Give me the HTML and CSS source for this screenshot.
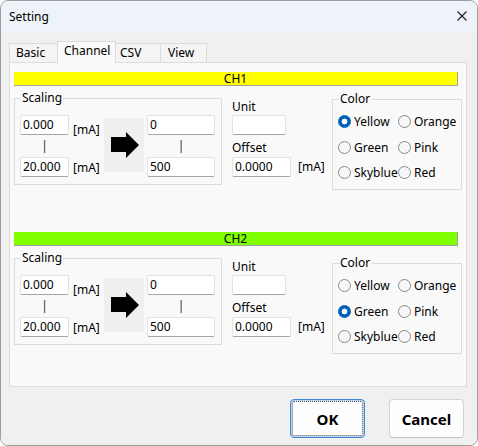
FILE: index.html
```html
<!DOCTYPE html>
<html>
<head>
<meta charset="utf-8">
<title>Setting</title>
<link rel="stylesheet" href="styles.css">
</head>
<body>
<div class="window">
  <div class="titlebar">
    <span class="title">Setting</span>
    <svg class="close" width="10" height="10" viewBox="0 0 10 10"><path d="M0.5 0.5 L9.5 9.5 M9.5 0.5 L0.5 9.5" stroke="#1c1c1c" stroke-width="1.1" fill="none"/></svg>
  </div>
  <div class="client">
    <div class="tabs">
      <div class="tab tab-basic">Basic</div>
      <div class="tab tab-channel selected">Channel</div>
      <div class="tab tab-csv">CSV</div>
      <div class="tab tab-view">View</div>
    </div>
    <div class="panel">
      <section class="channel first">
        <div class="ch-bar ch1">CH1</div>
        <div class="ch-row">
          <div class="group scaling">
            <div class="group-title">Scaling</div>
            <div class="scale-grid">
              <div class="tb in-l row1">0.000</div>
              <div class="unit-lbl u1">[mA]</div>
              <div class="arrow-box"><svg width="28" height="26" viewBox="0 0 28 26"><path d="M0 5 H15 V0 L28 13 L15 26 V20 H0 Z" fill="#000"/></svg></div>
              <div class="tb in-r row1">0</div>
              <div class="vbar vl">|</div>
              <div class="vbar vr">|</div>
              <div class="tb in-l row3">20.000</div>
              <div class="unit-lbl u3">[mA]</div>
              <div class="tb in-r row3">500</div>
            </div>
          </div>
          <div class="unit-col">
            <div class="lbl">Unit</div>
            <div class="tb unit-tb"></div>
            <div class="lbl offset-lbl">Offset</div>
            <div class="offset-row"><div class="tb offset-tb">0.0000</div><span class="offset-unit">[mA]</span></div>
          </div>
          <div class="group color">
            <div class="group-title">Color</div>
            <div class="radio-grid">
              <div class="radio"><span class="dot on"></span>Yellow</div>
              <div class="radio"><span class="dot"></span>Orange</div>
              <div class="radio"><span class="dot"></span>Green</div>
              <div class="radio"><span class="dot"></span>Pink</div>
              <div class="radio"><span class="dot"></span>Skyblue</div>
              <div class="radio"><span class="dot"></span>Red</div>
            </div>
          </div>
        </div>
      </section>
      <section class="channel second">
        <div class="ch-bar ch2">CH2</div>
        <div class="ch-row">
          <div class="group scaling">
            <div class="group-title">Scaling</div>
            <div class="scale-grid">
              <div class="tb in-l row1">0.000</div>
              <div class="unit-lbl u1">[mA]</div>
              <div class="arrow-box"><svg width="28" height="26" viewBox="0 0 28 26"><path d="M0 5 H15 V0 L28 13 L15 26 V20 H0 Z" fill="#000"/></svg></div>
              <div class="tb in-r row1">0</div>
              <div class="vbar vl">|</div>
              <div class="vbar vr">|</div>
              <div class="tb in-l row3">20.000</div>
              <div class="unit-lbl u3">[mA]</div>
              <div class="tb in-r row3">500</div>
            </div>
          </div>
          <div class="unit-col">
            <div class="lbl">Unit</div>
            <div class="tb unit-tb"></div>
            <div class="lbl offset-lbl">Offset</div>
            <div class="offset-row"><div class="tb offset-tb">0.0000</div><span class="offset-unit">[mA]</span></div>
          </div>
          <div class="group color color-low">
            <div class="group-title">Color</div>
            <div class="radio-grid">
              <div class="radio"><span class="dot"></span>Yellow</div>
              <div class="radio"><span class="dot"></span>Orange</div>
              <div class="radio"><span class="dot on"></span>Green</div>
              <div class="radio"><span class="dot"></span>Pink</div>
              <div class="radio"><span class="dot"></span>Skyblue</div>
              <div class="radio"><span class="dot"></span>Red</div>
            </div>
          </div>
        </div>
      </section>
    </div>
    <div class="buttons">
      <div class="btn btn-ok">OK</div>
      <div class="btn btn-cancel">Cancel</div>
    </div>
  </div>
</div>
</body>
</html>
```

FILE: styles.css
```css
* { box-sizing: border-box; }
html, body {
  margin: 0;
  padding: 0;
  background: #ffffff;
}
body {
  font-family: "Noto Sans", "Open Sans", sans-serif;
  font-size: 12px;
  color: #000;
}
.window {
  width: 478px;
  height: 446px;
  border: 1px solid #9c9c9c;
  border-radius: 8px;
  overflow: hidden;
  background: #f0f0f0;
  display: flex;
  flex-direction: column;
}
.titlebar {
  height: 31px;
  flex: none;
  background: #eef3f9;
  display: flex;
  align-items: center;
  justify-content: space-between;
  padding-left: 8px;
  padding-right: 10px;
}
.title {
  font-size: 12px;
  line-height: 16px;
  color: #000;
}
.close { display: block; margin-top: -1px; }
.client {
  flex: 1;
  background: #f0f0f0;
}
.tabs {
  display: flex;
  align-items: flex-end;
  height: 30px;
  padding-left: 8px;
}
.tab {
  height: 19px;
  line-height: 18px;
  border: 1px solid #dcdcdc;
  border-bottom: none;
  background: #f4f4f4;
  white-space: nowrap;
}
.tab + .tab { margin-left: -1px; }
.tab-basic { width: 49px; padding-left: 6px; }
.tab-channel { width: 59px; padding-left: 6px; }
.tab-csv { width: 46px; padding-left: 4px; }
.tab-view { width: 47px; padding-left: 7px; }
.tab.selected {
  height: 22px;
  line-height: 18px;
  background: #f9f9f9;
  margin-bottom: -1px;
  position: relative;
  z-index: 1;
}
.panel {
  margin-left: 8px;
  width: 458px;
  height: 325px;
  border: 1px solid #dcdcdc;
  background: #f9f9f9;
}
.channel { padding-left: 4px; }
.first .ch-bar { margin-top: 9px; }
.second .ch-bar { margin-top: 42px; }
.ch-bar {
  width: 444px;
  height: 14px;
  line-height: 13px;
  text-align: center;
  font-size: 12px;
  border-right: 1px solid #a0a0a0;
  border-bottom: 1px solid #a0a0a0;
}
.ch1 { background: #ffff00; }
.ch2 { background: #80ff00; }
.ch-row {
  display: flex;
  align-items: flex-start;
  margin-top: 12px;
}
.group {
  border: 1px solid #dcdcdc;
}
.group-title {
  width: fit-content;
  margin-top: -9px;
  margin-left: 6px;
  padding: 0 1px;
  line-height: 16px;
  background: #f9f9f9;
}
.scaling {
  width: 208px;
  height: 87px;
}
.scale-grid {
  display: grid;
  grid-template-columns: 49px 35px 40px 71px;
  grid-template-rows: 20px 22px 20px;
  margin-top: 9px;
  margin-left: 5px;
}
.tb {
  height: 20px;
  background: #ffffff;
  border: 1px solid #e2e2e2;
  border-bottom-color: #a6a6a6;
  border-radius: 2px;
  line-height: 18px;
  padding-left: 2px;
  white-space: nowrap;
}
.in-l { grid-column: 1; }
.in-r { grid-column: 4; margin-left: 3px; width: 68px; }
.row1 { grid-row: 1; }
.row3 { grid-row: 3; }
.unit-lbl {
  grid-column: 2;
  padding-left: 4px;
  line-height: 16px;
  align-self: start;
}
.u1 { grid-row: 1; margin-top: 7px; }
.u3 { grid-row: 3; margin-top: 3px; }
.arrow-box {
  grid-column: 3;
  grid-row: 1 / 4;
  margin-top: 3px;
  height: 54px;
  background: #efefef;
  display: flex;
  align-items: center;
  justify-content: center;
}
.arrow-box svg { display: block; margin-left: 1px; }
.vbar {
  grid-row: 2;
  line-height: 22px;
  text-align: center;
  color: #2a2a2a;
}
.vl { grid-column: 1; }
.vr { grid-column: 4; margin-left: 3px; width: 68px; }
.unit-col {
  width: 100px;
  margin-left: 10px;
  margin-top: 1px;
}
.lbl { line-height: 16px; }
.unit-tb { width: 54px; }
.offset-lbl { margin-top: 5px; }
.offset-row {
  display: flex;
  align-items: flex-start;
  margin-top: 1px;
}
.offset-tb { width: 59px; }
.offset-unit {
  margin-left: 7px;
  margin-top: 2px;
  line-height: 16px;
}
.color {
  width: 130px;
  height: 91px;
  margin-top: 1px;
}
.color-low { margin-top: 5px; }
.radio-grid {
  display: grid;
  grid-template-columns: 60px 62px;
  grid-auto-rows: 25.5px;
  margin-top: 2px;
  margin-left: 5px;
}
.radio {
  display: flex;
  align-items: center;
  gap: 3px;
  white-space: nowrap;
}
.dot {
  width: 13px;
  height: 13px;
  flex: none;
  border-radius: 50%;
  border: 1px solid #8a8a8a;
  background: #f7f7f7;
}
.dot.on {
  border-color: #005fb8;
  background: radial-gradient(circle, #ffffff 0 2.6px, #005fb8 3.2px);
}
.buttons {
  display: flex;
  justify-content: flex-end;
  gap: 24px;
  margin-top: 12px;
  padding-right: 13px;
}
.btn {
  width: 75px;
  height: 39px;
  border-radius: 4px;
  background: #fdfdfd;
  font-weight: bold;
  font-size: 15px;
  display: flex;
  align-items: center;
  justify-content: center;
}
.btn-ok {
  border: 1px solid #3d86d4;
  box-shadow: inset 0 0 0 1px #b9d3f0;
  outline: 1px dotted #505050;
  outline-offset: -3px;
}
.btn-cancel {
  border: 1px solid #d4d4d4;
  border-bottom-color: #c0c0c0;
}
```
